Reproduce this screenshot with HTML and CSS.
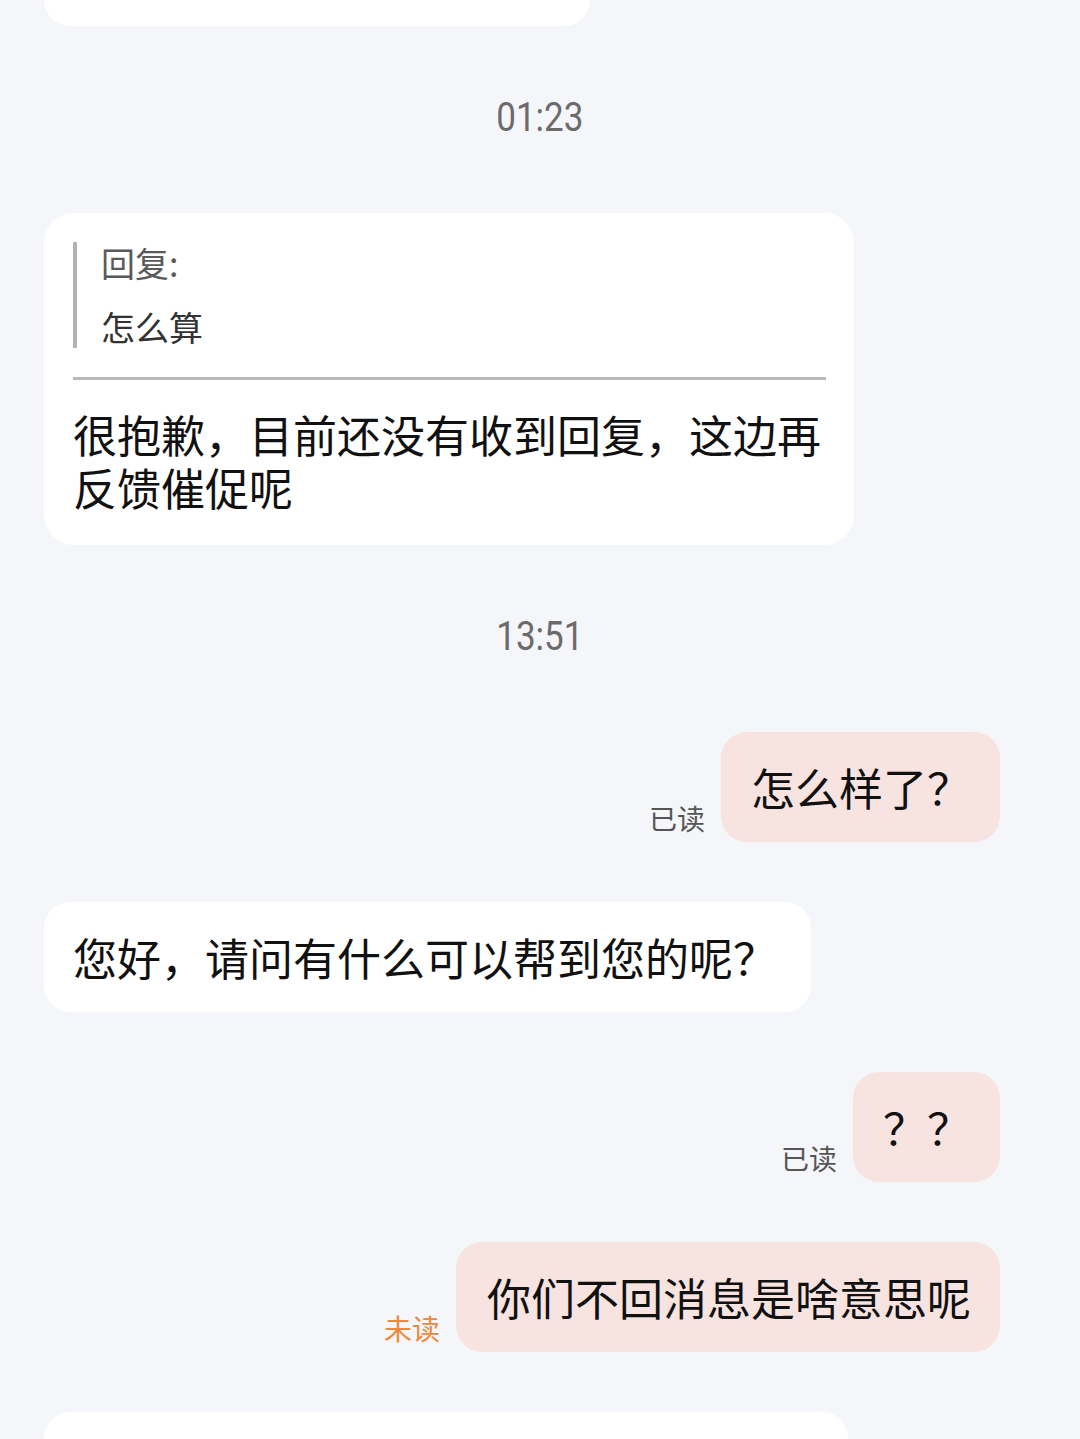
FILE: index.html
```html
<!DOCTYPE html>
<html lang="zh-CN">
<head>
<meta charset="utf-8">
<title>Chat</title>
<link rel="stylesheet" href="styles.css">
</head>
<body>
<div class="chat">
  <div class="bubble in stub-top"></div>

  <div class="time"><span>01:23</span></div>

  <div class="row in-row">
    <div class="bubble in reply">
      <div class="quote">
        <div class="quote-label">回复:</div>
        <div class="quote-text">怎么算</div>
      </div>
      <div class="divider"></div>
      <div class="msg-text">很抱歉，目前还没有收到回复，这边再反馈催促呢</div>
    </div>
  </div>

  <div class="time"><span>13:51</span></div>

  <div class="row out-row">
    <span class="status read">已读</span>
    <div class="bubble out">怎么样了？</div>
  </div>

  <div class="row in-row gap">
    <div class="bubble in single">您好，请问有什么可以帮到您的呢？</div>
  </div>

  <div class="row out-row gap">
    <span class="status read">已读</span>
    <div class="bubble out">？？</div>
  </div>

  <div class="row out-row gap">
    <span class="status unread">未读</span>
    <div class="bubble out wide">你们不回消息是啥意思呢</div>
  </div>

  <div class="row in-row gap">
    <div class="bubble in stub-bottom"></div>
  </div>
</div>
</body>
</html>
```

FILE: styles.css
```css
html, body {
  margin: 0;
  padding: 0;
  height: 1439px;
  overflow: hidden;
  background: #f5f6fa;
}

body {
  font-family: "Noto Sans CJK SC", "Noto Sans", sans-serif;
  color: #111;
}

.chat {
  display: flex;
  flex-direction: column;
  padding: 0 80px 0 44px;
}

.bubble {
  box-sizing: border-box;
  font-size: 44px;
  line-height: 52px;
}

.bubble.in {
  background: #ffffff;
}

.bubble.out {
  background: #f7e4e0;
  border-radius: 26px;
  padding: 29px 29px 29px 30px;
  color: #111;
}

.bubble.out.wide {
  padding-left: 31px;
}

.stub-top {
  width: 546px;
  height: 26px;
  border-radius: 0 0 26px 26px;
}

.stub-bottom {
  width: 804px;
  height: 60px;
  border-radius: 26px 26px 0 0;
}

.time {
  margin: 72px -80px 75px -44px;
  height: 40px;
  text-align: center;
  color: #6b6b6b;
  font-family: "Roboto", "Noto Sans", sans-serif;
  font-size: 40px;
  line-height: 40px;
}

.time span {
  display: inline-block;
  transform: scaleX(0.875);
}

.row {
  display: flex;
  align-items: flex-end;
}

.row.gap {
  margin-top: 60px;
}

.in-row {
  justify-content: flex-start;
}

.out-row {
  justify-content: flex-end;
  gap: 16px;
}

.reply {
  width: 810px;
  border-radius: 30px;
  padding: 29px 28px 31px 29px;
}

.quote {
  border-left: 4px solid #b3b3b3;
  padding-left: 24px;
  display: flex;
  flex-direction: column;
  gap: 22px;
}

.quote-label {
  font-size: 34px;
  line-height: 42px;
  color: #5a5a5a;
}

.quote-text {
  font-size: 34px;
  line-height: 42px;
  color: #333;
}

.divider {
  height: 3px;
  background: #b8b8b8;
  margin: 29px 0 28px;
}

.msg-text {
  font-size: 44px;
  line-height: 53px;
  color: #111;
}

.single {
  border-radius: 26px;
  padding: 29px 34px 29px 29px;
}

.status {
  font-size: 28px;
  line-height: 28px;
  margin-bottom: 10px;
}

.status.read {
  color: #555;
}

.status.unread {
  color: #e98a3e;
}
```
